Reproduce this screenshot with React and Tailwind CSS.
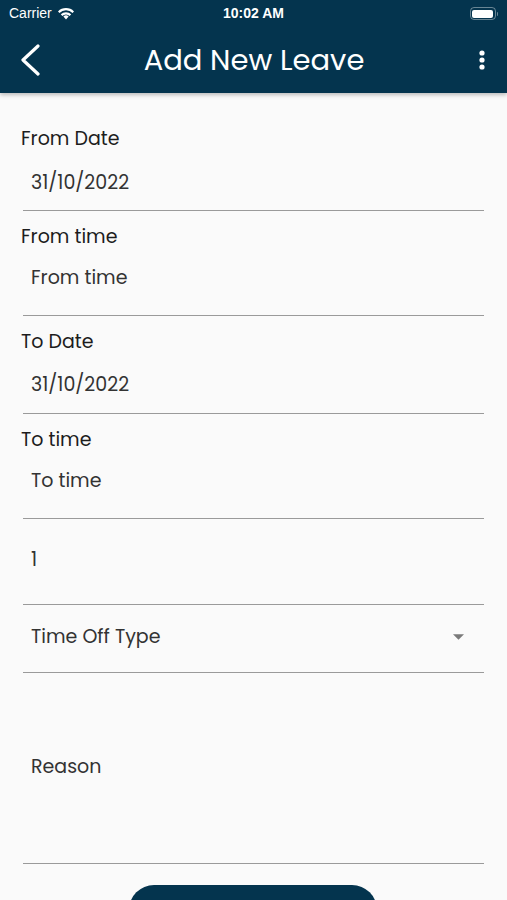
const font = { fontFamily: 'Poppins, "Open Sans", "Noto Sans", sans-serif' };

function StatusBar() {
  return (
    <div className="relative flex h-[27px] items-center justify-between px-[9px] text-white" style={{ fontFamily: '"Liberation Sans", Arial, sans-serif' }}>
      <div className="flex items-center gap-[5px] text-[14px]">
        <span>Carrier</span>
        <svg width="18" height="13" viewBox="0 0 18 13" fill="white">
          <path d="M9 12.5l2.6-2.9a3.6 3.6 0 0 0-5.2 0z" />
          <path d="M3.8 7.3l1.5 1.6a5.3 5.3 0 0 1 7.4 0l1.5-1.6a7.4 7.4 0 0 0-10.4 0z" />
          <path d="M1 4.4l1.5 1.6a9.3 9.3 0 0 1 13 0L17 4.4a11.4 11.4 0 0 0-16 0z" />
        </svg>
      </div>
      <span className="absolute left-1/2 -translate-x-1/2 text-[14px] font-semibold">10:02 AM</span>
      <div className="flex items-center">
        <div className="flex h-[13px] w-[26px] items-center rounded-[4px] border border-white/40 p-[1.5px]">
          <div className="h-full w-full rounded-[2px] bg-white" />
        </div>
        <div className="ml-[1px] h-[4px] w-[1.5px] rounded-r bg-white/40" />
      </div>
    </div>
  );
}

function Field({ label, value, labelGap, boxH, padTop }) {
  return (
    <div>
      {label && (
        <div className="h-[24px] pt-[1px] text-[19px] leading-[24px] text-[#1d1d1d]" style={{ marginTop: labelGap }}>
          {label}
        </div>
      )}
      <div className="ml-[2px] border-b-[1.5px] border-[#9a9a9a] pl-[8px]" style={{ height: boxH, paddingTop: padTop }}>
        <span className="block text-[19px] leading-[24px] text-[#333]">{value}</span>
      </div>
    </div>
  );
}

export default function App() {
  return (
    <div className="h-[900px] w-[507px] overflow-hidden bg-[#fafafa]" style={font}>
      <div className="relative z-10 h-[93px] bg-[#04344e] shadow-[0_2px_4px_rgba(0,0,0,0.25)]">
        <StatusBar />
        <div className="flex h-[66px] items-center justify-between pl-[19px] pr-[22px] text-white">
          <svg width="22" height="32" viewBox="0 0 22 32" fill="none" stroke="white" strokeWidth="3.2" strokeLinecap="round" strokeLinejoin="round">
            <path d="M19 2L4 16l15 14" />
          </svg>
          <h1 className="mr-[12px] text-[29px] font-normal leading-none">Add New Leave</h1>
          <svg width="6" height="20" viewBox="0 0 6 20" fill="white">
            <circle cx="3" cy="3" r="2.6" />
            <circle cx="3" cy="10" r="2.6" />
            <circle cx="3" cy="17" r="2.6" />
          </svg>
        </div>
      </div>

      <div className="pl-[21px] pr-[23px]">
        <Field label="From Date" value="31/10/2022" labelGap={33} boxH={61} padTop={21} />
        <Field label="From time" value="From time" labelGap={13} boxH={68} padTop={18} />
        <Field label="To Date" value="31/10/2022" labelGap={13} boxH={61} padTop={20} />
        <Field label="To time" value="To time" labelGap={13} boxH={68} padTop={18} />
        <Field value="1" boxH={86} padTop={29} />

        <div className="ml-[2px] flex h-[68px] items-start justify-between border-b-[1.5px] border-[#9a9a9a] pl-[8px] pr-[20px] pt-[20px]">
          <span className="text-[19px] leading-[24px] text-[#333]">Time Off Type</span>
          <svg width="11" height="6" viewBox="0 0 10 5" className="mt-[9px]">
            <path d="M0 0h10L5 5z" fill="#7a7a7a" />
          </svg>
        </div>

        <Field value="Reason" boxH={191} padTop={82} />

        <div className="mt-[21px] flex justify-center">
          <button className="h-[50px] w-[248px] rounded-full bg-[#04344e]" />
        </div>
      </div>
    </div>
  );
}
